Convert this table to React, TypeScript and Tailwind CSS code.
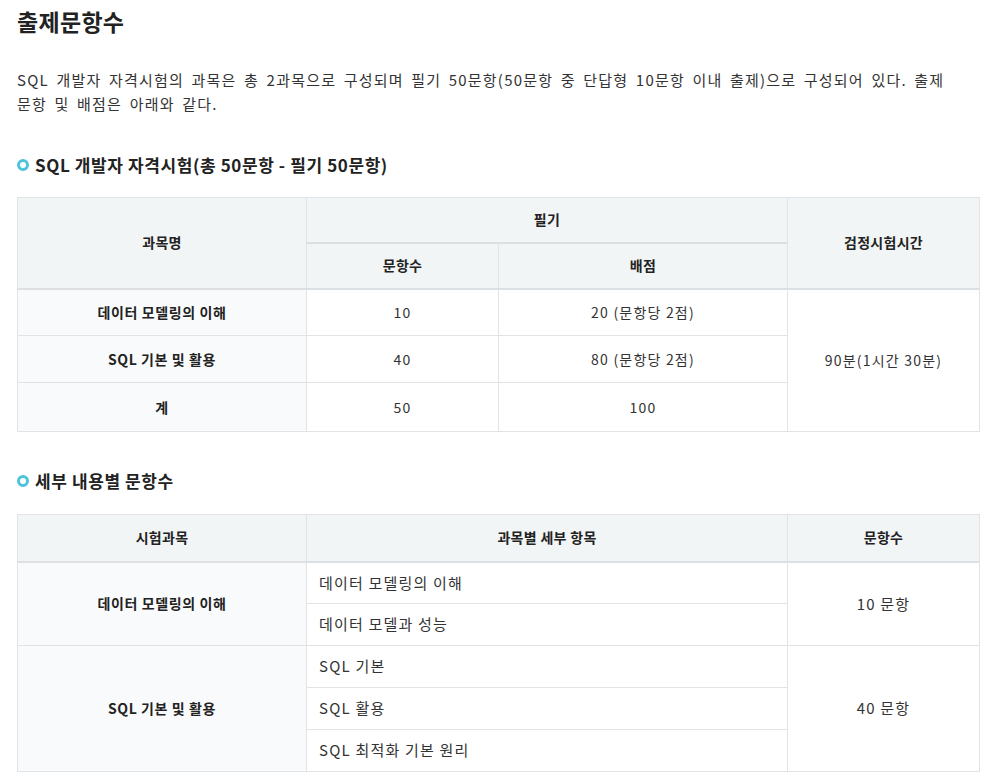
import { ReactNode } from 'react';

const font = { fontFamily: '"Noto Sans CJK KR", "Noto Sans", sans-serif' };

function SectionTitle({ children }: { children: ReactNode }) {
  return (
    <h3 className="flex items-center gap-[6px] text-[17px] font-bold leading-6 tracking-[0.6px] text-[#222]">
      <span className="inline-block w-3 h-3 rounded-full border-[3px] border-[#4cc4dc] bg-white shrink-0" />
      {children}
    </h3>
  );
}

const th = 'border border-[#e1e3e6] border-b-2 border-b-[#dde0e3] bg-[#f2f5f6] font-bold text-[14px] tracking-[0.3px] text-[#222] text-center';
const tdHead = 'border border-[#e1e3e6] bg-[#f9fafb] font-bold text-[14px] tracking-[0.6px] text-[#222] text-center';
const td = 'border border-[#e1e3e6] bg-white text-[14px] tracking-[1.2px] text-[#333] text-center';
const tdSub = 'border border-[#e1e3e6] bg-white text-[15px] tracking-[1.2px] text-[#333] text-left pl-3';
const tdCount = 'border border-[#e1e3e6] bg-white text-[15px] tracking-[1.2px] text-[#333] text-center';

export default function App() {
  return (
    <div className="bg-white min-h-screen pl-[17px] pr-[14px] pt-[5px] text-[#333]" style={font}>
      <h2 className="text-[23px] font-bold leading-8 tracking-[0.3px] text-[#222]">출제문항수</h2>

      <p className="mt-[31px] text-[15px] leading-6 tracking-[1.2px] [word-spacing:3px] break-keep text-[#333]">
        SQL 개발자 자격시험의 과목은 총 2과목으로 구성되며 필기 50문항(50문항 중 단답형 10문항 이내 출제)으로 구성되어 있다. 출제 문항 및 배점은 아래와 같다.
      </p>

      <div className="mt-[37px]">
        <SectionTitle>SQL 개발자 자격시험(총 50문항 - 필기 50문항)</SectionTitle>
      </div>

      <table className="mt-5 w-full border-collapse border-t border-t-[#222] table-fixed">
        <colgroup>
          <col className="w-[289px]" />
          <col className="w-[192px]" />
          <col className="w-[289px]" />
          <col />
        </colgroup>
        <thead>
          <tr className="h-[45px]">
            <th rowSpan={2} className={th}>과목명</th>
            <th colSpan={2} className={th}>필기</th>
            <th rowSpan={2} className={th}>검정시험시간</th>
          </tr>
          <tr className="h-[46px]">
            <th className={th}>문항수</th>
            <th className={th}>배점</th>
          </tr>
        </thead>
        <tbody>
          <tr className="h-[47px]">
            <td className={tdHead}>데이터 모델링의 이해</td>
            <td className={td}>10</td>
            <td className={td}>20 (문항당 2점)</td>
            <td rowSpan={3} className={td}>90분(1시간 30분)</td>
          </tr>
          <tr className="h-[47px]">
            <td className={tdHead}>SQL 기본 및 활용</td>
            <td className={td}>40</td>
            <td className={td}>80 (문항당 2점)</td>
          </tr>
          <tr className="h-[49px]">
            <td className={tdHead}>계</td>
            <td className={td}>50</td>
            <td className={td}>100</td>
          </tr>
        </tbody>
      </table>

      <div className="mt-[37px]">
        <SectionTitle>세부 내용별 문항수</SectionTitle>
      </div>

      <table className="mt-[21px] w-full border-collapse border-t border-t-[#222] table-fixed">
        <colgroup>
          <col className="w-[289px]" />
          <col className="w-[481px]" />
          <col />
        </colgroup>
        <thead>
          <tr className="h-[47px]">
            <th className={th}>시험과목</th>
            <th className={th}>과목별 세부 항목</th>
            <th className={th}>문항수</th>
          </tr>
        </thead>
        <tbody>
          <tr className="h-[42px]">
            <td rowSpan={2} className={tdHead}>데이터 모델링의 이해</td>
            <td className={tdSub}>데이터 모델링의 이해</td>
            <td rowSpan={2} className={tdCount}>10 문항</td>
          </tr>
          <tr className="h-[42px]">
            <td className={tdSub}>데이터 모델과 성능</td>
          </tr>
          <tr className="h-[42px]">
            <td rowSpan={3} className={tdHead}>SQL 기본 및 활용</td>
            <td className={tdSub}>SQL 기본</td>
            <td rowSpan={3} className={tdCount}>40 문항</td>
          </tr>
          <tr className="h-[42px]">
            <td className={tdSub}>SQL 활용</td>
          </tr>
          <tr className="h-[42px]">
            <td className={tdSub}>SQL 최적화 기본 원리</td>
          </tr>
        </tbody>
      </table>
    </div>
  );
}
